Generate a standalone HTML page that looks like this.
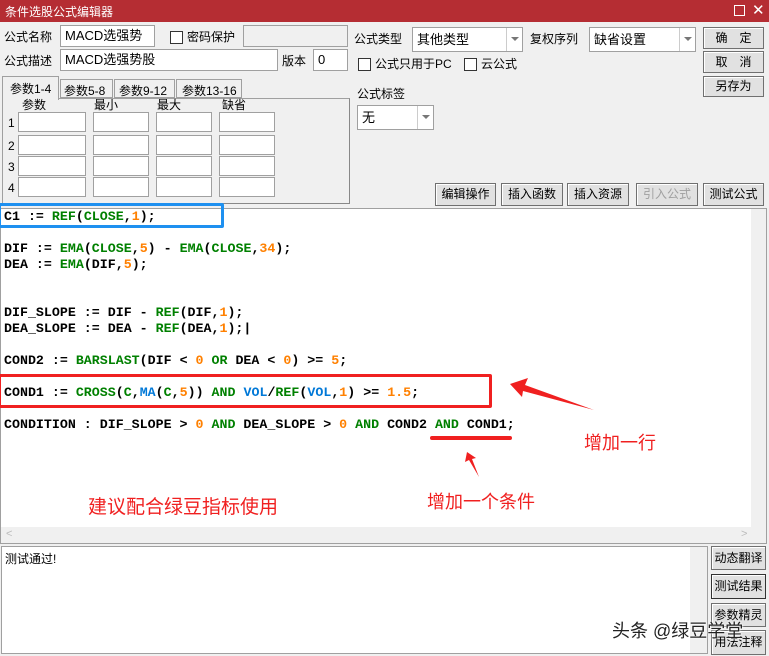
<!DOCTYPE html>
<html><head><meta charset="utf-8">
<style>
*{margin:0;padding:0;box-sizing:border-box}
body{width:769px;height:656px;background:#f0f0f0;position:relative;overflow:hidden;font-family:"Liberation Sans","Noto Sans CJK SC",sans-serif;font-size:12px;color:#000}
.a{position:absolute}
.inp{position:absolute;background:#fff;border:1px solid #a0a0a0;height:22px;padding:2px 4px;font-size:13px;line-height:16px}
.lbl{position:absolute;font-size:12px;line-height:14px}
.cb{position:absolute;width:13px;height:13px;background:#fff;border:1px solid #333}
.btn{position:absolute;border:1px solid #707070;background:#e1e1e1;box-shadow:inset 1px 1px 0 #fff;text-align:center;font-size:12px}
.dd{position:absolute;width:16px;border-left:1px solid #ccc;top:0;bottom:0;right:0}
.dd:after{content:"";position:absolute;left:4px;top:9px;border:4px solid transparent;border-top:4px solid #777}
.code{font-family:"Liberation Mono",monospace;font-weight:bold;font-size:13.3px;line-height:16px;white-space:pre;position:absolute;left:4px}
.g{color:#008000}.o{color:#ff8000}.b{color:#0078d7}
.red{color:#f02020;font-family:"Noto Sans CJK SC",sans-serif;position:absolute}
</style></head><body>
<div class="a" style="left:0;top:0;width:769px;height:22px;background:#b52d33"></div>
<div class="a" style="left:5px;top:3px;color:#fff;font-size:12px">条件选股公式编辑器</div>
<div class="a" style="left:734px;top:5px;width:11px;height:11px;border:1px solid #fff"></div>
<div class="a" style="left:752px;top:1px;color:#fff;font-size:15px">✕</div>

<div class="lbl" style="left:4px;top:30px">公式名称</div>
<div class="inp" style="left:60px;top:25px;width:95px">MACD选强势</div>
<div class="cb" style="left:170px;top:31px"></div>
<div class="lbl" style="left:187px;top:30px">密码保护</div>
<div class="inp" style="left:243px;top:25px;width:105px;background:#f0f0f0"></div>
<div class="lbl" style="left:4px;top:54px">公式描述</div>
<div class="inp" style="left:60px;top:49px;width:218px">MACD选强势股</div>
<div class="lbl" style="left:282px;top:54px">版本</div>
<div class="inp" style="left:313px;top:49px;width:35px">0</div>

<div class="lbl" style="left:354px;top:32px">公式类型</div>
<div class="inp" style="left:412px;top:27px;width:111px;height:25px;padding-top:4px">其他类型<div class="dd"></div></div>
<div class="lbl" style="left:530px;top:32px">复权序列</div>
<div class="inp" style="left:589px;top:27px;width:107px;height:25px;padding-top:4px">缺省设置<div class="dd"></div></div>
<div class="cb" style="left:358px;top:58px"></div>
<div class="lbl" style="left:375px;top:57px">公式只用于PC</div>
<div class="cb" style="left:464px;top:58px"></div>
<div class="lbl" style="left:481px;top:57px">云公式</div>
<div class="lbl" style="left:357px;top:87px">公式标签</div>
<div class="inp" style="left:357px;top:105px;width:77px;height:25px;padding-top:4px">无<div class="dd"></div></div>

<div class="btn" style="left:703px;top:27px;width:61px;height:22px;line-height:20px">确　定</div>
<div class="btn" style="left:703px;top:51px;width:61px;height:22px;line-height:20px">取　消</div>
<div class="btn" style="left:703px;top:76px;width:61px;height:21px;line-height:19px">另存为</div>

<!-- tabs -->
<div class="a" style="left:2px;top:98px;width:348px;height:106px;border:1px solid #a0a0a0;border-right-color:#888;border-bottom-color:#888;background:#f0f0f0"></div>
<div class="a" style="left:2px;top:76px;width:57px;height:24px;border:1px solid #a0a0a0;border-bottom:none;background:#f0f0f0;padding:3px 0 0 7px">参数1-4</div>
<div class="a" style="left:60px;top:79px;width:53px;height:19px;border:1px solid #a0a0a0;padding:2px 0 0 3px">参数5-8</div>
<div class="a" style="left:114px;top:79px;width:61px;height:19px;border:1px solid #a0a0a0;padding:2px 0 0 4px">参数9-12</div>
<div class="a" style="left:176px;top:79px;width:66px;height:19px;border:1px solid #a0a0a0;padding:2px 0 0 5px">参数13-16</div>
<div class="lbl" style="left:22px;top:98px">参数</div>
<div class="lbl" style="left:94px;top:98px">最小</div>
<div class="lbl" style="left:157px;top:98px">最大</div>
<div class="lbl" style="left:222px;top:98px">缺省</div>
<div class="lbl" style="left:8px;top:116px">1</div><div class="lbl" style="left:8px;top:139px">2</div><div class="lbl" style="left:8px;top:160px">3</div><div class="lbl" style="left:8px;top:181px">4</div>
<div class="inp" style="left:18px;top:112px;width:68px;height:20px"></div><div class="inp" style="left:93px;top:112px;width:56px;height:20px"></div><div class="inp" style="left:156px;top:112px;width:56px;height:20px"></div><div class="inp" style="left:219px;top:112px;width:56px;height:20px"></div>
<div class="inp" style="left:18px;top:135px;width:68px;height:20px"></div><div class="inp" style="left:93px;top:135px;width:56px;height:20px"></div><div class="inp" style="left:156px;top:135px;width:56px;height:20px"></div><div class="inp" style="left:219px;top:135px;width:56px;height:20px"></div>
<div class="inp" style="left:18px;top:156px;width:68px;height:20px"></div><div class="inp" style="left:93px;top:156px;width:56px;height:20px"></div><div class="inp" style="left:156px;top:156px;width:56px;height:20px"></div><div class="inp" style="left:219px;top:156px;width:56px;height:20px"></div>
<div class="inp" style="left:18px;top:177px;width:68px;height:20px"></div><div class="inp" style="left:93px;top:177px;width:56px;height:20px"></div><div class="inp" style="left:156px;top:177px;width:56px;height:20px"></div><div class="inp" style="left:219px;top:177px;width:56px;height:20px"></div>

<div class="btn" style="left:435px;top:183px;width:61px;height:23px;line-height:21px">编辑操作</div>
<div class="btn" style="left:501px;top:183px;width:62px;height:23px;line-height:21px">插入函数</div>
<div class="btn" style="left:567px;top:183px;width:62px;height:23px;line-height:21px">插入资源</div>
<div class="btn" style="left:636px;top:183px;width:62px;height:23px;line-height:21px;color:#a0a0a0">引入公式</div>
<div class="btn" style="left:703px;top:183px;width:61px;height:23px;line-height:21px">测试公式</div>

<!-- code area -->
<div class="a" style="left:0;top:208px;width:767px;height:336px;border:1px solid #a0a0a0;background:#fff"></div>
<div class="a" style="left:751px;top:209px;width:15px;height:334px;background:#f0f0f0"></div>
<div class="a" style="left:1px;top:527px;width:765px;height:16px;background:#f0f0f0"></div>
<div class="a" style="left:6px;top:528px;color:#bbb;font-size:11px">&lt;</div>
<div class="a" style="left:741px;top:528px;color:#bbb;font-size:11px">&gt;</div>

<div class="code" style="top:209px">C1 := <span class="g">REF</span>(<span class="g">CLOSE</span>,<span class="o">1</span>);</div>
<div class="code" style="top:241px">DIF := <span class="g">EMA</span>(<span class="g">CLOSE</span>,<span class="o">5</span>) - <span class="g">EMA</span>(<span class="g">CLOSE</span>,<span class="o">34</span>);</div>
<div class="code" style="top:257px">DEA := <span class="g">EMA</span>(DIF,<span class="o">5</span>);</div>
<div class="code" style="top:305px">DIF_SLOPE := DIF - <span class="g">REF</span>(DIF,<span class="o">1</span>);</div>
<div class="code" style="top:321px">DEA_SLOPE := DEA - <span class="g">REF</span>(DEA,<span class="o">1</span>);|</div>
<div class="code" style="top:353px">COND2 := <span class="g">BARSLAST</span>(DIF &lt; <span class="o">0</span> <span class="g">OR</span> DEA &lt; <span class="o">0</span>) &gt;= <span class="o">5</span>;</div>
<div class="code" style="top:385px">COND1 := <span class="g">CROSS</span>(<span class="g">C</span>,<span class="b">MA</span>(<span class="g">C</span>,<span class="o">5</span>)) <span class="g">AND</span> <span class="b">VOL</span>/<span class="g">REF</span>(<span class="b">VOL</span>,<span class="o">1</span>) &gt;= <span class="o">1.5</span>;</div>
<div class="code" style="top:417px">CONDITION : DIF_SLOPE &gt; <span class="o">0</span> <span class="g">AND</span> DEA_SLOPE &gt; <span class="o">0</span> <span class="g">AND</span> COND2 <span class="g">AND</span> COND1;</div>

<div class="a" style="left:-2px;top:203px;width:226px;height:25px;border:3px solid #1e90f0;border-radius:2px"></div>
<div class="a" style="left:-2px;top:374px;width:494px;height:34px;border:3px solid #f02020;border-radius:2px"></div>
<div class="a" style="left:430px;top:436px;width:82px;height:4px;background:#f02020;border-radius:2px"></div>
<svg class="a" style="left:0;top:0" width="769" height="656">
<polygon points="510,384 528,378 525,385 594,410 523,391 522,397" fill="#f02020"/>
<polygon points="467,452 476,458 472,459 479,477 469,460 465,462" fill="#f02020"/>
</svg>
<div class="red" style="left:584px;top:429px;font-size:18px">增加一行</div>
<div class="red" style="left:427px;top:488px;font-size:18px">增加一个条件</div>
<div class="red" style="left:88px;top:492px;font-size:19px">建议配合绿豆指标使用</div>

<!-- output -->
<div class="a" style="left:1px;top:546px;width:707px;height:108px;border:1px solid #a0a0a0;background:#fff"></div>
<div class="a" style="left:690px;top:547px;width:17px;height:106px;background:#f0f0f0"></div>
<div class="a" style="left:5px;top:550px;font-size:12px">测试通过!</div>
<div class="btn" style="left:711px;top:546px;width:55px;height:24px;line-height:22px">动态翻译</div>
<div class="btn" style="left:711px;top:574px;width:55px;height:25px;line-height:23px;border-color:#333">测试结果</div>
<div class="btn" style="left:711px;top:603px;width:55px;height:24px;line-height:22px">参数精灵</div>
<div class="btn" style="left:711px;top:630px;width:55px;height:25px;line-height:23px">用法注释</div>
<div class="a" style="left:612px;top:617px;font-size:18px;color:#222;text-shadow:0 0 2px #fff,0 0 2px #fff">头条 @绿豆学堂</div>
</body></html>
